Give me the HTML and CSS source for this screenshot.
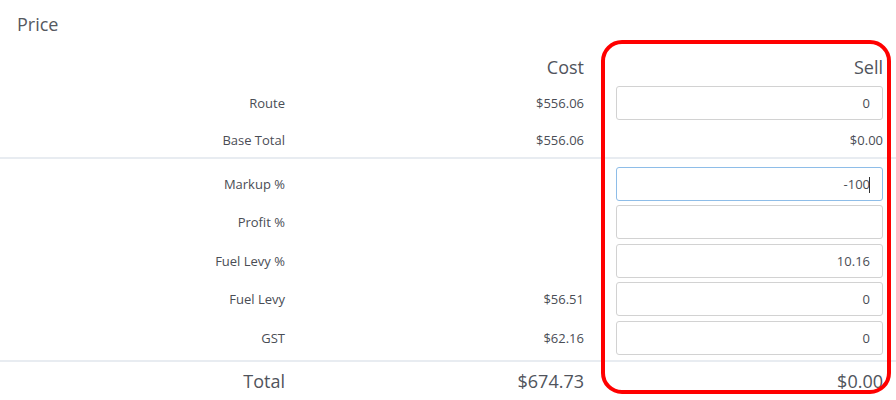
FILE: index.html
```html
<!DOCTYPE html>
<html>
<head>
<meta charset="utf-8">
<link rel="stylesheet" href="styles.css">
</head>
<body>
<div class="panel">
  <h2 class="title">Price</h2>
  <div class="grid head">
    <div></div><div class="cost">Cost</div><div class="sell">Sell</div>
  </div>
  <div class="grid row">
    <div class="label">Route</div><div class="cost">$556.06</div><div class="sell"><div class="field">0</div></div>
  </div>
  <div class="grid row plain divider">
    <div class="label">Base Total</div><div class="cost">$556.06</div><div class="sell text">$0.00</div>
  </div>
  <div class="group">
    <div class="grid row">
      <div class="label">Markup %</div><div class="cost"></div><div class="sell"><div class="field focus">-100<span class="caret"></span></div></div>
    </div>
    <div class="grid row">
      <div class="label">Profit %</div><div class="cost"></div><div class="sell"><div class="field"></div></div>
    </div>
    <div class="grid row">
      <div class="label">Fuel Levy %</div><div class="cost"></div><div class="sell"><div class="field">10.16</div></div>
    </div>
    <div class="grid row">
      <div class="label">Fuel Levy</div><div class="cost">$56.51</div><div class="sell"><div class="field">0</div></div>
    </div>
    <div class="grid row">
      <div class="label">GST</div><div class="cost">$62.16</div><div class="sell"><div class="field">0</div></div>
    </div>
  </div>
  <div class="grid total">
    <div class="label">Total</div><div class="cost">$674.73</div><div class="sell">$0.00</div>
  </div>
  <div class="highlight"></div>
</div>
</body>
</html>
```
FILE: styles.css
```css
* { box-sizing: border-box; }
html, body { margin: 0; padding: 0; background: #fff; }
body {
  font-family: "Open Sans", "Liberation Sans", sans-serif;
  color: #4a4d55;
  width: 896px;
  height: 400px;
  overflow: hidden;
}
.panel { position: relative; height: 400px; }
.title {
  margin: 0;
  padding: 12px 0 0 17px;
  height: 50px;
  font-size: 18px;
  font-weight: 400;
  line-height: 24px;
  color: #555960;
}
.grid {
  display: grid;
  grid-template-columns: 285px 299px 299px;
  align-items: center;
}
.grid > div { text-align: right; }
.grid > .sell { padding-left: 32px; }
.head {
  height: 34px;
  font-size: 18px;
  line-height: 32px;
  color: #50545c;
}
.row {
  height: 38.5px;
  font-size: 13px;
  line-height: 18px;
}
.grid.plain { height: 36px; }
.divider { border-bottom: 2px solid #e8ecf1; }
.group { padding-top: 6px; padding-bottom: 3px; border-bottom: 2px solid #e8ecf1; }
.field {
  height: 34px;
  border: 1px solid #d2d2d2;
  border-radius: 3px;
  padding: 0 12px;
  line-height: 32px;
  font-size: 13px;
  text-align: right;
  color: #4a4d55;
  background: #fff;
}
.field.focus { border-color: #8ebde8; }
.caret {
  display: inline-block;
  width: 1px;
  height: 16px;
  background: #333;
  vertical-align: -4px;
  margin-left: -1px;
}
.total {
  height: 38px;
  font-size: 18px;
  line-height: 38px;
  color: #50545c;
}
.highlight {
  position: absolute;
  left: 601px;
  top: 40px;
  width: 290px;
  height: 354px;
  border: 4px solid #ff0000;
  border-radius: 21px;
  pointer-events: none;
}
```
